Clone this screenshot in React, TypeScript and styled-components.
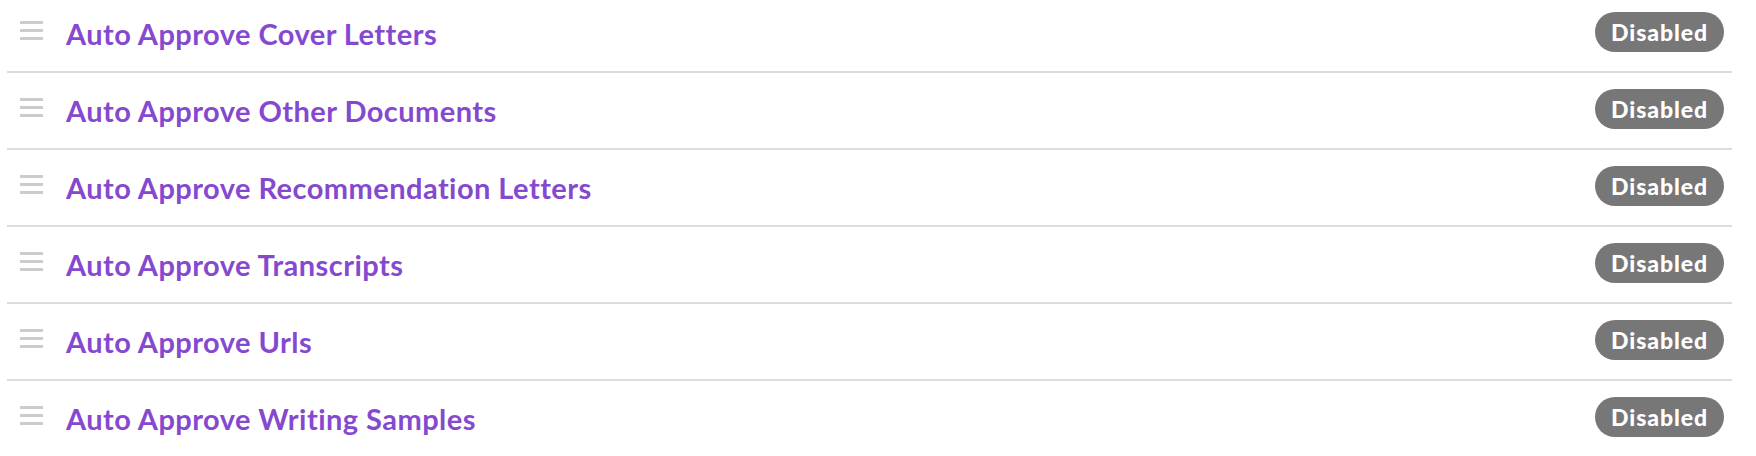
import React from "react";
import styled, { createGlobalStyle } from "styled-components";

const GlobalStyle = createGlobalStyle`
  html, body {
    margin: 0;
    padding: 0;
    background: #ffffff;
    overflow: hidden;
  }
  body {
    font-family: Lato, "Liberation Sans", sans-serif;
  }
`;

const List = styled.ul`
  list-style: none;
  margin: -4px 0 0 7px;
  padding: 0;
  width: 1725px;
`;

const Row = styled.li`
  display: flex;
  align-items: center;
  height: 40px;
  padding: 16px 8px 19px 13px;
  border-bottom: 2px solid #dcdcdc;
`;

const Handle = styled.span`
  display: flex;
  flex-direction: column;
  gap: 5px;
  width: 23px;
  margin-top: -3px;
  flex-shrink: 0;
  cursor: grab;
`;

const Bar = styled.span`
  display: block;
  height: 3px;
  background: #cccccc;
`;

const Title = styled.a`
  margin-left: 23px;
  flex: 1;
  font-family: Lato, "Liberation Sans", sans-serif;
  font-weight: 700;
  font-size: 29px;
  letter-spacing: 0.45px;
  color: #8549d0;
  text-decoration: none;
  line-height: 1;
  margin-top: 2px;
`;

const Badge = styled.span`
  display: inline-flex;
  align-items: center;
  justify-content: center;
  width: 129px;
  height: 40px;
  border-radius: 20px;
  background: #777777;
  color: #ffffff;
  font-family: Lato, "Liberation Sans", sans-serif;
  font-weight: 900;
  font-size: 23px;
  letter-spacing: 0.9px;
  flex-shrink: 0;
`;

const items = [
  "Auto Approve Cover Letters",
  "Auto Approve Other Documents",
  "Auto Approve Recommendation Letters",
  "Auto Approve Transcripts",
  "Auto Approve Urls",
  "Auto Approve Writing Samples",
];

export default function App() {
  return (
    <>
      <GlobalStyle />
      <List>
        {items.map((label) => (
          <Row key={label}>
            <Handle>
              <Bar />
              <Bar />
              <Bar />
            </Handle>
            <Title href="#">{label}</Title>
            <Badge>Disabled</Badge>
          </Row>
        ))}
      </List>
    </>
  );
}
